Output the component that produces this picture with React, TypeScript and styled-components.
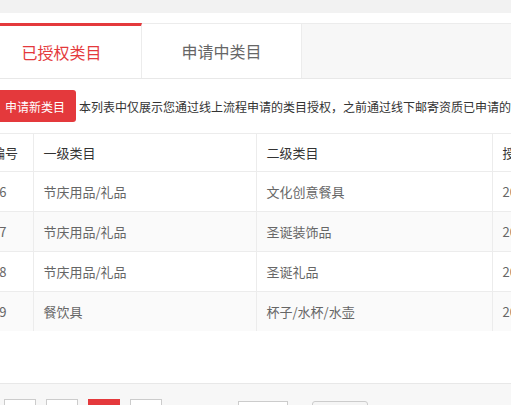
import React, { useState } from "react";
import styled, { createGlobalStyle } from "styled-components";

const RED = "#e4393c";

const GlobalStyle = createGlobalStyle`
  html, body {
    margin: 0;
    padding: 0;
    background: #fff;
    overflow: hidden;
  }
  body {
    font-family: "Noto Sans CJK SC", "Noto Sans", "Liberation Sans", sans-serif;
    color: #333;
  }
`;

const Page = styled.div`
  margin-left: -18px;
  width: 1000px;
`;

const TopStrip = styled.div`
  height: 13px;
  background: #f2f2f2;
  margin-bottom: 10px;
`;

const TabBar = styled.div`
  display: flex;
  height: 54px;
  background: #f7f7f7;
  border-top: 1px solid #ececec;
  border-bottom: 1px solid #e8e8e8;
`;

const Tab = styled.button<{ $active?: boolean }>`
  box-sizing: border-box;
  width: 160px;
  height: ${(p) => (p.$active ? "55px" : "54px")};
  margin-top: ${(p) => (p.$active ? "-1px" : "0")};
  padding: 0;
  background: #fff;
  border: none;
  border-right: 1px solid #ececec;
  border-top: ${(p) => (p.$active ? `3px solid ${RED}` : "none")};
  font-family: inherit;
  font-size: 16px;
  color: ${(p) => (p.$active ? RED : "#666")};
  cursor: pointer;
`;

const Toolbar = styled.div`
  display: flex;
  align-items: center;
  padding: 11px 0 11px 12px;
  white-space: nowrap;
`;

const PrimaryButton = styled.button`
  height: 32px;
  padding: 0 11px;
  background: ${RED};
  color: #fff;
  border: none;
  border-radius: 3px;
  font-family: inherit;
  font-size: 12px;
  cursor: pointer;
`;

const Notice = styled.span`
  margin-left: 3px;
  font-size: 12px;
  color: #333;
`;

const Table = styled.table`
  border-collapse: collapse;
  table-layout: fixed;
  width: 920px;
  font-size: 13px;
  border-top: 1px solid #ececec;
`;

const HeadCell = styled.th`
  height: 37px;
  padding: 0 10px;
  text-align: left;
  font-weight: normal;
  color: #333;
  border-left: 1px solid #ececec;
  border-bottom: 1px solid #ececec;
  &:first-child {
    border-left: none;
  }
`;

const Row = styled.tr<{ $striped?: boolean }>`
  background: ${(p) => (p.$striped ? "#fafafa" : "#fff")};
`;

const Cell = styled.td<{ $last?: boolean }>`
  height: 39px;
  padding: 0 10px;
  color: #666;
  border-left: 1px solid #ececec;
  border-bottom: ${(p) => (p.$last ? "none" : "1px solid #ececec")};
  &:first-child {
    border-left: none;
  }
`;

const Spacer = styled.div`
  height: 52px;
`;

const Footer = styled.div`
  display: flex;
  align-items: flex-start;
  height: 60px;
  padding: 15px 0 0 22px;
  background: #f7f7f7;
  border-top: 1px solid #e8e8e8;
`;

const PageButtons = styled.div`
  display: flex;
  gap: 10px;
`;

const PageBtn = styled.button<{ $current?: boolean }>`
  box-sizing: border-box;
  width: 32px;
  height: 30px;
  padding: 0;
  border: 1px solid ${(p) => (p.$current ? RED : "#ccc")};
  background: ${(p) => (p.$current ? RED : "#fff")};
  color: ${(p) => (p.$current ? "#fff" : "#666")};
  font-family: inherit;
  font-size: 12px;
`;

const Jump = styled.div`
  display: flex;
  align-items: center;
  margin-left: 76px;
  padding-top: 2px;
  font-size: 12px;
  color: #666;
`;

const PageInput = styled.input`
  box-sizing: border-box;
  width: 50px;
  height: 28px;
  border: 1px solid #ccc;
  background: #fff;
  margin: 0 24px 0 0;
`;

const GoButton = styled.button`
  box-sizing: border-box;
  width: 56px;
  height: 28px;
  border: 1px solid #ccc;
  border-radius: 3px;
  background: #f5f5f5;
  color: #666;
  font-family: inherit;
  font-size: 12px;
`;

const rows = [
  { id: "16", first: "节庆用品/礼品", second: "文化创意餐具", date: "2017-12-06" },
  { id: "17", first: "节庆用品/礼品", second: "圣诞装饰品", date: "2017-12-06" },
  { id: "18", first: "节庆用品/礼品", second: "圣诞礼品", date: "2017-12-06" },
  { id: "19", first: "餐饮具", second: "杯子/水杯/水壶", date: "2017-12-06" },
];

export default function App() {
  const [tab, setTab] = useState(0);
  return (
    <Page>
      <GlobalStyle />
      <TopStrip />
      <TabBar>
        <Tab $active={tab === 0} onClick={() => setTab(0)}>
          已授权类目
        </Tab>
        <Tab $active={tab === 1} onClick={() => setTab(1)}>
          申请中类目
        </Tab>
      </TabBar>
      <Toolbar>
        <PrimaryButton>申请新类目</PrimaryButton>
        <Notice>
          本列表中仅展示您通过线上流程申请的类目授权，之前通过线下邮寄资质已申请的类目授权不在此列表中展示
        </Notice>
      </Toolbar>
      <Table>
        <colgroup>
          <col style={{ width: 51 }} />
          <col style={{ width: 223 }} />
          <col style={{ width: 236 }} />
          <col style={{ width: 410 }} />
        </colgroup>
        <thead>
          <tr>
            <HeadCell>编号</HeadCell>
            <HeadCell>一级类目</HeadCell>
            <HeadCell>二级类目</HeadCell>
            <HeadCell>授权时间</HeadCell>
          </tr>
        </thead>
        <tbody>
          {rows.map((r, i) => (
            <Row key={r.id} $striped={i % 2 === 1}>
              <Cell $last={i === rows.length - 1}>{r.id}</Cell>
              <Cell $last={i === rows.length - 1}>{r.first}</Cell>
              <Cell $last={i === rows.length - 1}>{r.second}</Cell>
              <Cell $last={i === rows.length - 1}>{r.date}</Cell>
            </Row>
          ))}
        </tbody>
      </Table>
      <Spacer />
      <Footer>
        <PageButtons>
          <PageBtn>«</PageBtn>
          <PageBtn>‹</PageBtn>
          <PageBtn $current>1</PageBtn>
          <PageBtn>›</PageBtn>
        </PageButtons>
        <Jump>
          <PageInput defaultValue="" />
          <GoButton>确定</GoButton>
        </Jump>
      </Footer>
    </Page>
  );
}
